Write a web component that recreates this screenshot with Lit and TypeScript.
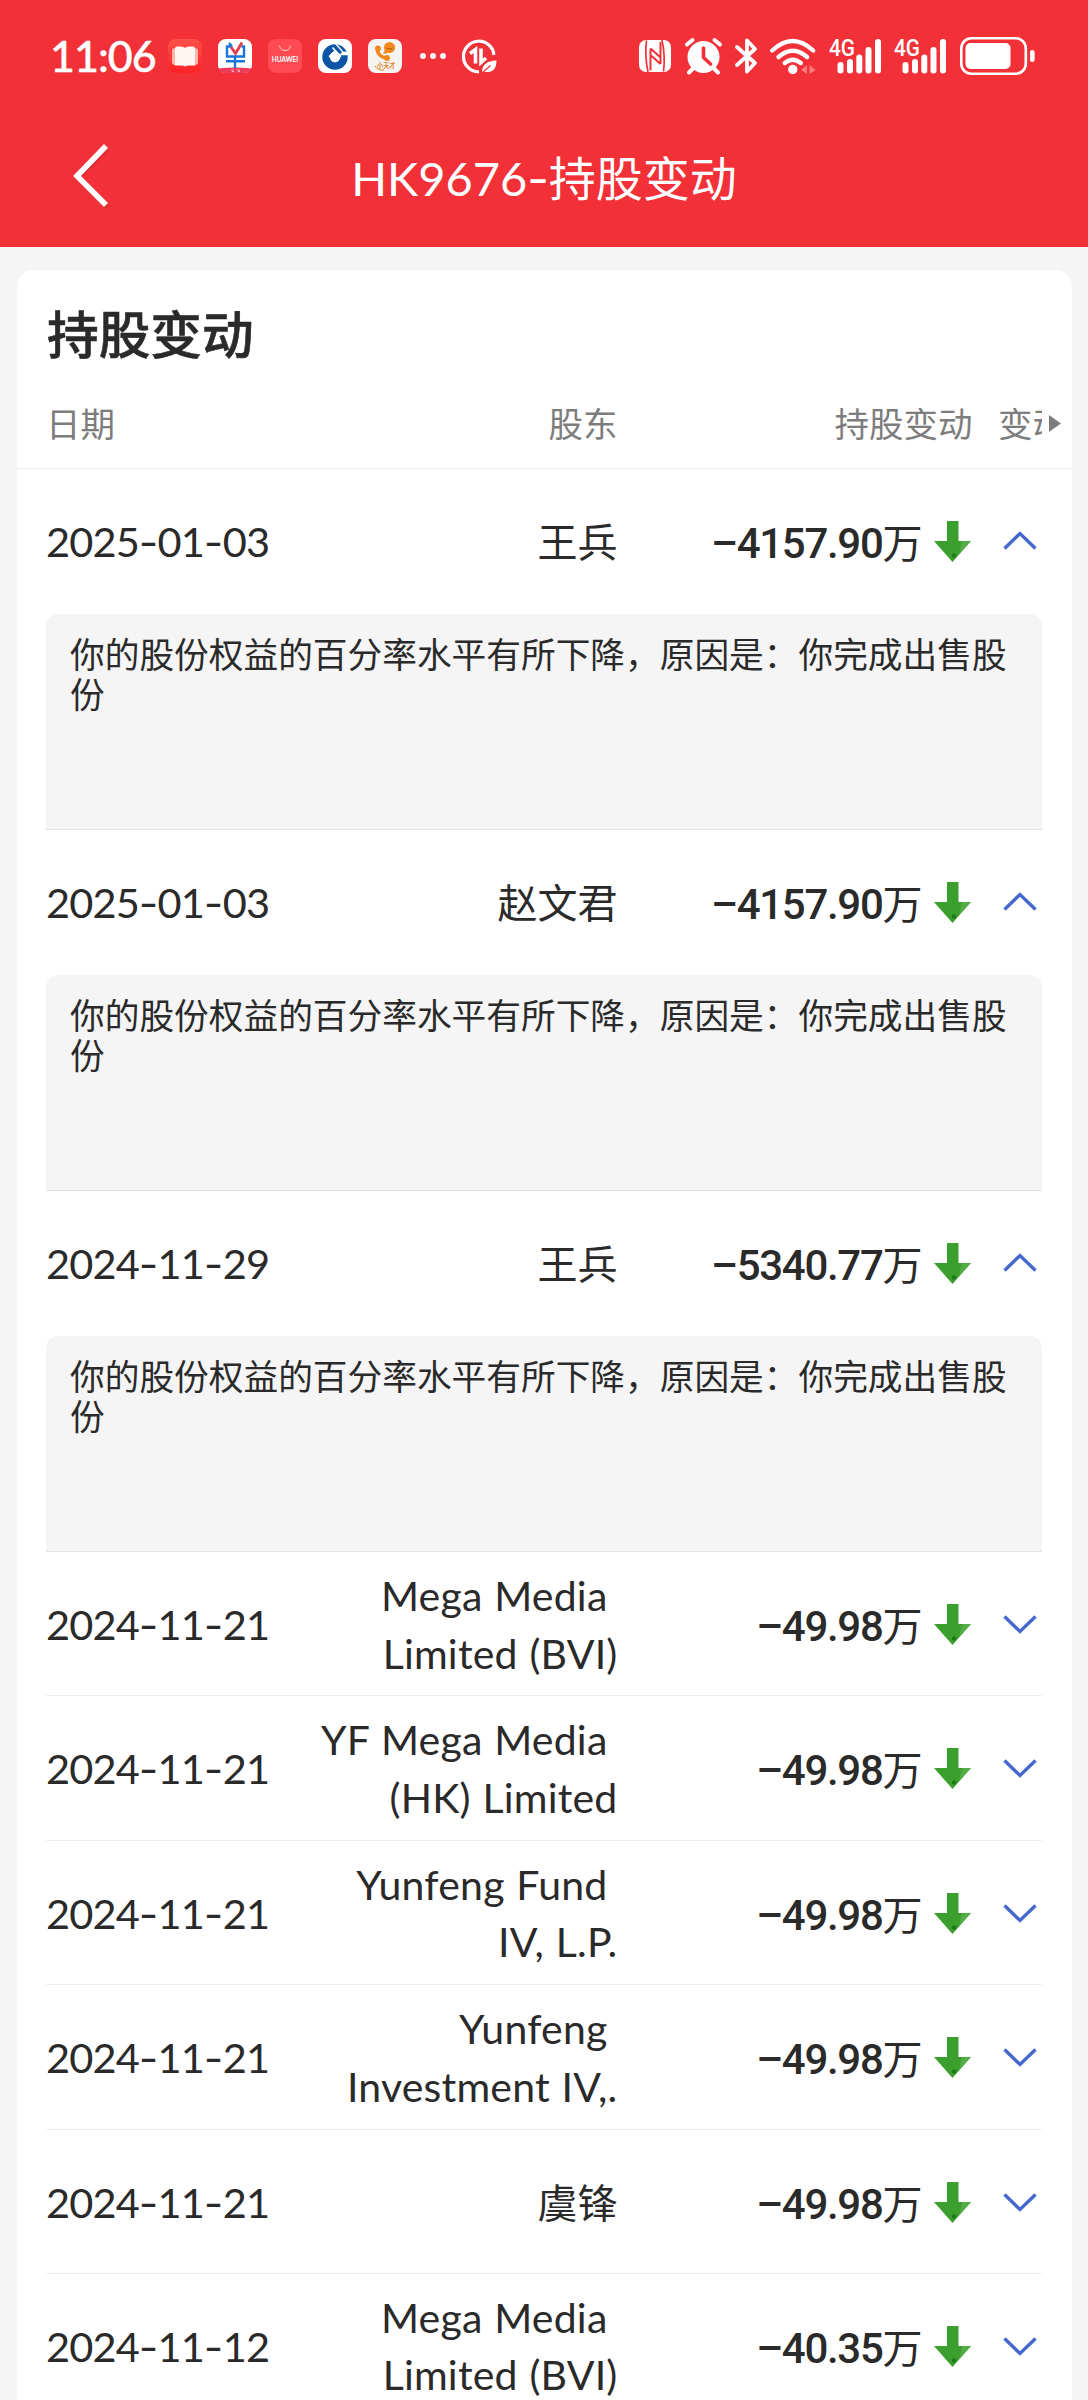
import { LitElement, html, css, svg, nothing } from "lit";
import { customElement, property } from "lit/decorators.js";

interface Change {
  date: string;
  holder: string[];
  amount: string;
  note?: string;
}

const NOTE = "你的股份权益的百分率水平有所下降，原因是：你完成出售股份";

const CHANGES: Change[] = [
  { date: "2025-01-03", holder: ["王兵"], amount: "–4157.90", note: NOTE },
  { date: "2025-01-03", holder: ["赵文君"], amount: "–4157.90", note: NOTE },
  { date: "2024-11-29", holder: ["王兵"], amount: "–5340.77", note: NOTE },
  { date: "2024-11-21", holder: ["Mega Media", "Limited (BVI)"], amount: "–49.98" },
  { date: "2024-11-21", holder: ["YF Mega Media", "(HK) Limited"], amount: "–49.98" },
  { date: "2024-11-21", holder: ["Yunfeng Fund", "IV, L.P."], amount: "–49.98" },
  { date: "2024-11-21", holder: ["Yunfeng", "Investment IV,."], amount: "–49.98" },
  { date: "2024-11-21", holder: ["虞锋"], amount: "–49.98" },
  { date: "2024-11-12", holder: ["Mega Media", "Limited (BVI)"], amount: "–40.35" },
];

@customElement("status-bar")
class StatusBar extends LitElement {
  static styles = css`
    :host {
      display: flex;
      align-items: center;
      height: 112px;
      padding: 0 53px 0 50px;
      box-sizing: border-box;
      color: #fff;
      font-family: Lato, "Noto Sans CJK SC", sans-serif;
    }
    .time {
      width: 118px;
      font-size: 43px;
      line-height: 60px;
      font-weight: 500;
      letter-spacing: -1px;
      white-space: nowrap;
      -webkit-text-stroke: 0.4px #fff;
    }
    .apps, .system { display: flex; align-items: center; }
    .apps { gap: 16px; }
    .system { margin-left: auto; }
    svg { display: block; flex: none; overflow: visible; }
    .dots { margin-left: 2px; }
    .data { margin-left: -1px; }
    .alarm { margin-left: 14px; }
    .bluetooth { margin-left: 13px; }
    .wifi { margin-left: 13px; }
    .signal { margin-left: 14px; }
    .battery { margin-left: 14px; }
  `;

  private signal() {
    return html`<svg class="signal" width="51" height="38" viewBox="0 0 51 38" fill="#fff">
      <text x="-1" y="19.300" font-family="Roboto" font-weight="500" font-size="24.500" textLength="26" lengthAdjust="spacingAndGlyphs">4G</text>
      <rect x="7.500" y="25" width="6" height="11.500" rx="3" />
      <rect x="17" y="22" width="6" height="14.500" rx="3" />
      <rect x="26.300" y="17.500" width="6" height="19" rx="3" />
      <rect x="35.500" y="10" width="6" height="26.500" rx="3" />
      <rect x="45" y="2" width="6" height="34.500" rx="3" />
    </svg>`;
  }

  render() {
    return html`
      <div class="time">11:06</div>
      <div class="apps">
        <svg width="34" height="34" viewBox="0 0 34 34">
          <defs>
            <linearGradient id="book" x1="0" y1="0" x2="0" y2="1">
              <stop offset="0" stop-color="#ff5149" /><stop offset="1" stop-color="#ff2226" />
            </linearGradient>
          </defs>
          <rect width="34" height="34" rx="8" fill="url(#book)" />
          <rect x="4" y="9" width="26" height="17" rx="3" fill="#ffb3ad" />
          <path d="M7 9.500q0-2 2-2h4q3 0 4 1.500q1-1.500 4-1.500h4q2 0 2 2v17h-6q-3 0-4 1q-1-1-4-1h-6z" fill="#fff6f4" />
        </svg>
        <svg width="34" height="34" viewBox="0 0 34 34">
          <rect width="34" height="34" rx="8" fill="#fff" />
          <path d="M0 29.500q17-2 34 0q-1 4.500-8 4.500H8q-7 0-8-4.500z" fill="#ee3b5b" />
          <path d="M13 31h3M19 31h3M14 32.500h2M20 32.500h2" stroke="#fcc" stroke-width=".8" />
          <g fill="none" stroke="#1677d8" stroke-width="2.400">
            <path d="M11 4l3 3.500M13 7.500H9v10h17v-10h-2.500M8 22.300h19M17 17.500v11.500" />
          </g>
          <path d="M13 8l4.500 6.500l6.500-11" fill="none" stroke="#e33a4e" stroke-width="2.800" />
        </svg>
        <svg width="34" height="34" viewBox="0 0 34 34">
          <rect width="34" height="34" rx="8" fill="#ff4a54" />
          <path d="M11.500 6.500q1 5 5.500 5t5.500-5" fill="none" stroke="#ffd0d0" stroke-width="1" />
          <text x="3.800" y="22.500" font-family="Lato" font-weight="700" font-size="7.400" fill="#fff" textLength="26.500" lengthAdjust="spacingAndGlyphs">HUAWEI</text>
        </svg>
        <svg width="34" height="34" viewBox="0 0 34 34">
          <rect width="34" height="34" rx="8" fill="#fff" />
          <circle cx="17" cy="18" r="9" fill="none" stroke="#0a55a5" stroke-width="7.500" />
          <path d="M14.500 8.500L21 15.500H31" fill="none" stroke="#fff" stroke-width="1.600" />
          <path d="M17 4l8 9" fill="none" stroke="#fff" stroke-width="1.300" />
          <path d="M23.500 13.800H31" fill="none" stroke="#fff" stroke-width="2.400" />
          <path d="M17 10.800l6.500 6.400l-6.500 6.400l-6.500-6.400z" fill="#fff" />
        </svg>
        <svg width="34" height="34" viewBox="0 0 34 34">
          <rect width="34" height="34" rx="8" fill="#f6f4f3" />
          <circle cx="21.500" cy="8.500" r="5.600" fill="#f28a1e" />
          <path d="M17 11l-2 4l5-1z" fill="#f28a1e" />
          <path d="M18.500 9q3 2.500 6 0" stroke="#a85a10" fill="none" />
          <path d="M9.500 9q-1 8 9.500 10.500" fill="none" stroke="#f0861c" stroke-width="3.400" />
          <circle cx="10" cy="9.500" r="2.900" fill="#f0861c" />
          <circle cx="19" cy="19" r="2.900" fill="#f0861c" />
          <text x="9" y="29" font-family="Noto Sans CJK SC" font-weight="700" font-size="6.500" fill="#d98a2c" textLength="18.500" lengthAdjust="spacingAndGlyphs">小天才</text>
          <path d="M7 27q3 5 9 4" fill="none" stroke="#d98a2c" stroke-width="1" />
        </svg>
        <svg class="dots" width="26" height="34" viewBox="0 0 26 34" fill="#fff">
          <circle cx="3" cy="17" r="2.900" /><circle cx="13" cy="17" r="2.900" /><circle cx="23" cy="17" r="2.900" />
        </svg>
        <svg class="data" width="36" height="36" viewBox="0 0 36 36" fill="none" stroke="#fff">
          <path d="M33 17A15.300 15.300 0 1 0 18 33.800" stroke-width="3.200" />
          <path d="M9 15.500l5.500-4v14M20 10.500V24.500l5-4.500" stroke-width="3.600" />
          <path d="M21 34q0-11 14.500-11.500q0 12.500-11 11.500z" fill="#fff" stroke="none" />
          <path d="M20.500 35.500l9-8" stroke="#f13037" stroke-width="1.400" />
        </svg>
      </div>
      <div class="system">
        <svg width="32" height="34" viewBox="0 0 32 34">
          <rect x="0" y="1" width="32" height="32" rx="7" fill="#fff" />
          <path d="M7.500 1.500q-2 15 1.500 31.500M24.500 32.500q2-15-1.500-31.500" stroke="#f13037" stroke-width="1.700" fill="none" />
          <path d="M11.500 9.500L21 18M11.500 31.500V9.500M21.500 3V25M11.500 16L21.500 25" stroke="#f13037" stroke-width="2" fill="none" />
        </svg>
        <svg class="alarm" width="37" height="36" viewBox="0 0 37 36">
          <circle cx="18.500" cy="19" r="16" fill="#fff" />
          <path d="M2 6.500l5.500-4.500M35 6.500L29.500 2M4 34.500l4-4M33 34.500l-4-4" stroke="#fff" stroke-width="4" stroke-linecap="round" />
          <path d="M18.500 10v9.500l7 6.500" stroke="#f13037" stroke-width="3.600" fill="none" stroke-linecap="round" stroke-linejoin="round" />
        </svg>
        <svg class="bluetooth" width="22" height="36" viewBox="0 0 22 36">
          <path d="M2 9l18 16l-8 8.500V2.500L20 11L2 27" fill="none" stroke="#fff" stroke-width="3.800" stroke-linecap="round" stroke-linejoin="round" />
        </svg>
        <svg class="wifi" width="46" height="36" viewBox="0 0 46 36" fill="none" stroke="#fff" stroke-width="4.400" stroke-linecap="round">
          <path d="M2.200 12.500q20.300-19 41 0M8.500 19q14.300-12.500 28.600 0M14.800 25q8-6.500 16 0" />
          <circle cx="22.800" cy="31.500" r="4.700" fill="#fff" stroke="none" />
          <path d="M31 32l6-5v9zM45.500 32l-6-5v9z" fill="#ff7a80" stroke="none" />
        </svg>
        ${this.signal()}${this.signal()}
        <svg class="battery" width="75" height="38" viewBox="0 0 75 38">
          <rect x="1.300" y="1.300" width="64.500" height="35.400" rx="10" fill="none" stroke="#fff" stroke-width="2.600" />
          <rect x="5.500" y="6" width="45" height="26" rx="5" fill="#fff" />
          <rect x="70" y="13" width="4.600" height="12" rx="2.300" fill="#fff" />
        </svg>
      </div>
    `;
  }
}

@customElement("change-row")
class ChangeRow extends LitElement {
  @property({ attribute: false }) change!: Change;

  static styles = css`
    :host {
      display: block;
      height: 144.4px;
      margin: 0 30px 0 29px;
      box-sizing: border-box;
      border-bottom: 1px solid #eee;
      color: #2a2a2a;
    }
    :host([expanded]) {
      height: 361px;
      border-bottom-color: #e2e2e2;
    }
    .line {
      display: grid;
      grid-template-columns: 230px 341.500px 305px 48px 72px;
      align-items: center;
      height: 145px;
    }
    .date {
      font-size: 41.5px;
      line-height: 50px;
      letter-spacing: -0.85px;
      white-space: nowrap;
      margin-top: -1px;
    }
    .dash {
      font-family: Inter, sans-serif;
      line-height: 1;
      letter-spacing: -0.4px;
    }
    .holder {
      text-align: right;
      font-size: 40px;
      line-height: 57.7px;
      padding-top: 3px;
    }
    .holder.latin {
      padding-top: 0;
      font-size: 41px;
      letter-spacing: 0.2px;
      word-spacing: 1px;
    }
    .name { white-space: nowrap; }
    .latin .name:first-child { padding-right: 10px; }
    .amount {
      display: flex;
      justify-content: flex-end;
      align-items: baseline;
      padding-top: 3px;
    }
    .number {
      font-family: Roboto, sans-serif;
      font-weight: 500;
      font-size: 42px;
      letter-spacing: -1.3px;
    }
    .unit { font-size: 40px; line-height: 56px; }
    svg { display: block; }
    .arrow { justify-self: end; }
    .chevron { margin: -1px 0 0 32px; }
    .note {
      height: 215px;
      box-sizing: border-box;
      padding: 21px 24px;
      border-radius: 12px 12px 0 0;
      background: #f5f5f5;
      font-size: 34.7px;
      line-height: 40px;
    }
  `;

  render() {
    const { date, holder, amount, note } = this.change;
    const [y, m, d] = date.split("-");
    return html`
      <div class="line">
        <div class="date">${y}<span class="dash">-</span>${m}<span class="dash">-</span>${d}</div>
        <div class="holder ${holder.length > 1 ? "latin" : ""}">
          ${holder.map((t) => html`<div class="name">${t}</div>`)}
        </div>
        <div class="amount"><span class="number">${amount}</span><span class="unit">万</span></div>
        <svg class="arrow" width="37" height="41" viewBox="0 0 37 41">
          <path d="M13 0h11.500v20H37L18.500 41L0 20h13z" fill="#3a9f2d" />
          <path d="M28 20H37L25 33.500z" fill="#5db352" opacity=".7" />
          <circle cx="20" cy="34.500" r="2.300" fill="#1f7a1c" />
        </svg>
        <svg class="chevron" width="34" height="20" viewBox="0 0 34 20">
          <path d=${note ? "M1.500 17.500L17 2.500L32.500 17.500" : "M1.500 2.500L17 17.500L32.500 2.500"} fill="none" stroke="#4568cf" stroke-width="3.400" />
        </svg>
      </div>
      ${note ? html`<div class="note">${note}</div>` : nothing}
    `;
  }
}

@customElement("app-root")
class AppRoot extends LitElement {
  static styles = css`
    :host {
      display: block;
      height: 2400px;
      overflow: hidden;
      background: #f5f5f5;
      font-family: Lato, "Noto Sans CJK SC", sans-serif;
    }
    .top {
      height: 247px;
      background: #f13037;
      color: #fff;
    }
    .nav {
      display: grid;
      grid-template-columns: 200px 1fr 200px;
      align-items: center;
      height: 132px;
    }
    .back { display: block; margin: -5px 0 0 71px; }
    .title {
      margin: 0;
      text-align: center;
      font-weight: 400;
      font-size: 47px;
      line-height: 70px;
      white-space: nowrap;
    }
    .dash { font-family: Inter, sans-serif; line-height: 1; }
    .card {
      margin: 23px 16px 0 17px;
      height: 2200px;
      border-radius: 17px;
      background: #fff;
    }
    .heading {
      margin: 0;
      padding: 25px 30px 0;
      height: 76px;
      font-size: 51.7px;
      line-height: 78px;
      font-weight: 500;
      color: #2a2a2a;
      -webkit-text-stroke: 0.6px #2a2a2a;
    }
    .columns {
      display: grid;
      grid-template-columns: 230px 341.500px 355px 25.500px 44px 7px 12px;
      align-items: center;
      height: 98px;
      padding: 5px 0 0 29px;
      box-sizing: border-box;
      border-bottom: 1px solid #eee;
      font-size: 34.5px;
      color: #7d7d7d;
      white-space: nowrap;
    }
    .end { text-align: right; }
    .clipped { overflow: hidden; }
    .more { display: block; grid-column: 7; margin-top: 2px; }
  `;

  render() {
    return html`
      <div class="top">
        <status-bar></status-bar>
        <div class="nav">
          <svg class="back" width="40" height="66" viewBox="0 0 40 66">
            <path d="M36 5L7 35L36 64" fill="none" stroke="#c4262c" stroke-width="5" opacity=".5" />
            <path d="M35 3L6 33L35 62" fill="none" stroke="#fff" stroke-width="5.600" />
          </svg>
          <h1 class="title">HK9676<span class="dash">-</span>持股变动</h1>
        </div>
      </div>
      <section class="card">
        <h2 class="heading">持股变动</h2>
        <div class="columns">
          <span>日期</span>
          <span class="end">股东</span>
          <span class="end">持股变动</span>
          <span></span>
          <span class="clipped">变动</span>
          <svg class="more" width="12" height="17" viewBox="0 0 12 17">${svg`<path d="M0 0L12 8.500L0 17z" fill="#7d7d7d" />`}</svg>
        </div>
        ${CHANGES.map((c) => html`<change-row .change=${c} ?expanded=${!!c.note}></change-row>`)}
      </section>
    `;
  }
}
